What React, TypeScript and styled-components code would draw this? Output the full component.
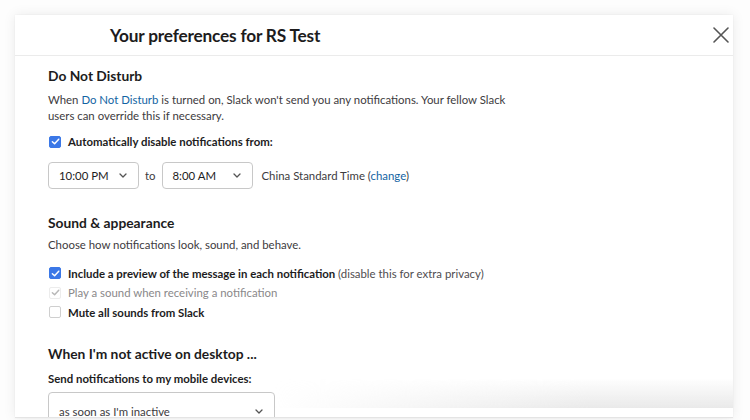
import React from "react";
import styled, { createGlobalStyle } from "styled-components";

const GlobalStyle = createGlobalStyle`
    body {
        margin: 0;
        background: #fdfdfd;
        font-family: Lato, "Noto Sans", "Liberation Sans", sans-serif;
        color: #1d1c1d;
        -webkit-font-smoothing: antialiased;
    }
`;

const Page = styled.div`
    width: 750px;
    height: 420px;
    overflow: hidden;
    padding: 15px 0 0 15px;
    box-sizing: border-box;
`;

const Modal = styled.div`
    position: relative;
    width: 718px;
    height: 403px;
    background: #fff;
    box-shadow: 0 0 12px rgba(0, 0, 0, 0.08), 0 0 2px rgba(0, 0, 0, 0.05);
    border-bottom: 1px solid #e4e4e4;
    box-sizing: border-box;
    overflow: hidden;
    display: flex;
    flex-direction: column;
`;

const Header = styled.div`
    height: 40px;
    flex-shrink: 0;
    display: flex;
    align-items: center;
    justify-content: space-between;
    padding: 0 4px 0 95px;
    border-bottom: 1px solid #ebebeb;

    h1 {
        margin: 0;
        font-size: 17.3px;
        font-weight: 700;
        letter-spacing: -0.2px;
    }
`;

const CloseButton = styled.button`
    width: 16px;
    height: 16px;
    padding: 0;
    border: none;
    background: none;
    cursor: pointer;
    display: flex;
`;

const Body = styled.div`
    padding: 9.5px 33px 0;
`;

const Heading = styled.h2<{ $top?: number }>`
    margin: ${(p) => p.$top ?? 0}px 0 0;
    font-size: 13.8px;
    line-height: 20px;
    font-weight: 700;
`;

const Text = styled.p<{ $top: number; $bold?: boolean }>`
    margin: ${(p) => p.$top}px 0 0;
    font-size: 11.4px;
    line-height: 16px;
    color: ${(p) => (p.$bold ? "#1d1c1d" : "#3d3b3e")};
    font-weight: ${(p) => (p.$bold ? 700 : 400)};
`;

const Link = styled.a`
    color: #1264a3;
    text-decoration: none;
`;

const CheckRow = styled.label<{ $top: number; $muted?: boolean }>`
    display: flex;
    align-items: center;
    gap: 7px;
    height: 19.5px;
    margin-top: ${(p) => p.$top}px;
    padding-left: 1px;
    font-size: 11.4px;
    font-weight: 700;
    color: ${(p) => (p.$muted ? "#8a888a" : "#1d1c1d")};

    span.note {
        font-weight: 400;
        color: #4f4d50;
    }
    span.plain {
        font-weight: 400;
    }
`;

const Box = styled.span<{ $state: "on" | "off" | "disabled" }>`
    width: 12px;
    height: 12px;
    flex-shrink: 0;
    border-radius: 2px;
    box-sizing: border-box;
    display: flex;
    align-items: center;
    justify-content: center;
    background: ${(p) => (p.$state === "on" ? "#3b78e7" : "#fff")};
    border: 1px solid
        ${(p) => (p.$state === "on" ? "#3b78e7" : p.$state === "disabled" ? "#ececec" : "#cfcfcf")};
`;

const TimeRow = styled.div`
    display: flex;
    align-items: center;
    margin-top: 10px;
    font-size: 11.4px;
    color: #3d3b3e;

    .to {
        margin: 0 6px;
    }
    .zone {
        margin-left: 9px;
    }
`;

const Select = styled.div<{ $width: number; $height?: number }>`
    width: ${(p) => p.$width}px;
    height: ${(p) => p.$height ?? 27}px;
    flex-shrink: 0;
    box-sizing: border-box;
    border: 1px solid #c8c8c8;
    border-radius: 4px;
    display: flex;
    align-items: center;
    justify-content: space-between;
    padding: 0 11px 0 10px;
    font-size: 11.4px;
    color: #1d1c1d;
    background: #fff;
`;

const MobileSelect = styled(Select)`
    margin-top: 5px;
    color: #3d3b3e;
`;

// scroll shadow at the foot of the dialog, heavier toward the right side
const Fade = styled.div`
    position: absolute;
    left: 0;
    right: 0;
    bottom: 9px;
    height: 30px;
    background: linear-gradient(to bottom, rgba(230, 230, 230, 0), rgba(228, 228, 228, 0.8));
    -webkit-mask-image: linear-gradient(to right, transparent 36%, #000 80%);
    mask-image: linear-gradient(to right, transparent 36%, #000 80%);
    pointer-events: none;
`;

const Check = ({ color }: { color: string }) => (
    <svg width="9" height="9" viewBox="0 0 10 10">
        <path d="M1.5 5.2 L4 7.6 L8.6 2.4" fill="none" stroke={color} strokeWidth="1.6" strokeLinecap="round" strokeLinejoin="round" />
    </svg>
);

const Chevron = () => (
    <svg width="8" height="5" viewBox="0 0 8 5">
        <path d="M1 1 L4 4 L7 1" fill="none" stroke="#555" strokeWidth="1.3" strokeLinecap="round" strokeLinejoin="round" />
    </svg>
);

const App = () => {
    return (
        <Page>
            <GlobalStyle />
            <Modal>
                <Header>
                    <h1>Your preferences for RS Test</h1>
                    <CloseButton aria-label="Close">
                        <svg width="16" height="16" viewBox="0 0 16 16">
                            <path d="M1 1 L15 15 M15 1 L1 15" stroke="#555" strokeWidth="1.6" strokeLinecap="round" />
                        </svg>
                    </CloseButton>
                </Header>

                <Body>
                    <Heading>Do Not Disturb</Heading>
                    <Text $top={6}>
                        When <Link href="#">Do Not Disturb</Link> is turned on, Slack won't send you any notifications. Your fellow Slack
                        <br />
                        users can override this if necessary.
                    </Text>
                    <CheckRow $top={8.5}>
                        <Box $state="on"><Check color="#fff" /></Box>
                        Automatically disable notifications from:
                    </CheckRow>
                    <TimeRow>
                        <Select $width={91}>10:00 PM <Chevron /></Select>
                        <span className="to">to</span>
                        <Select $width={91}>8:00 AM <Chevron /></Select>
                        <span className="zone">
                            China Standard Time (<Link href="#">change</Link>)
                        </span>
                    </TimeRow>

                    <Heading $top={24}>Sound &amp; appearance</Heading>
                    <Text $top={4}>Choose how notifications look, sound, and behave.</Text>
                    <CheckRow $top={11}>
                        <Box $state="on"><Check color="#fff" /></Box>
                        <span>
                            Include a preview of the message in each notification <span className="note">(disable this for extra privacy)</span>
                        </span>
                    </CheckRow>
                    <CheckRow $top={0} $muted>
                        <Box $state="disabled"><Check color="#b8b8b8" /></Box>
                        <span className="plain">Play a sound when receiving a notification</span>
                    </CheckRow>
                    <CheckRow $top={0}>
                        <Box $state="off" />
                        Mute all sounds from Slack
                    </CheckRow>

                    <Heading $top={22}>When I'm not active on desktop ...</Heading>
                    <Text $top={7} $bold>Send notifications to my mobile devices:</Text>
                    <MobileSelect $width={227} $height={38}>as soon as I'm inactive <Chevron /></MobileSelect>
                </Body>
                <Fade />
            </Modal>
        </Page>
    );
};

export default App;
